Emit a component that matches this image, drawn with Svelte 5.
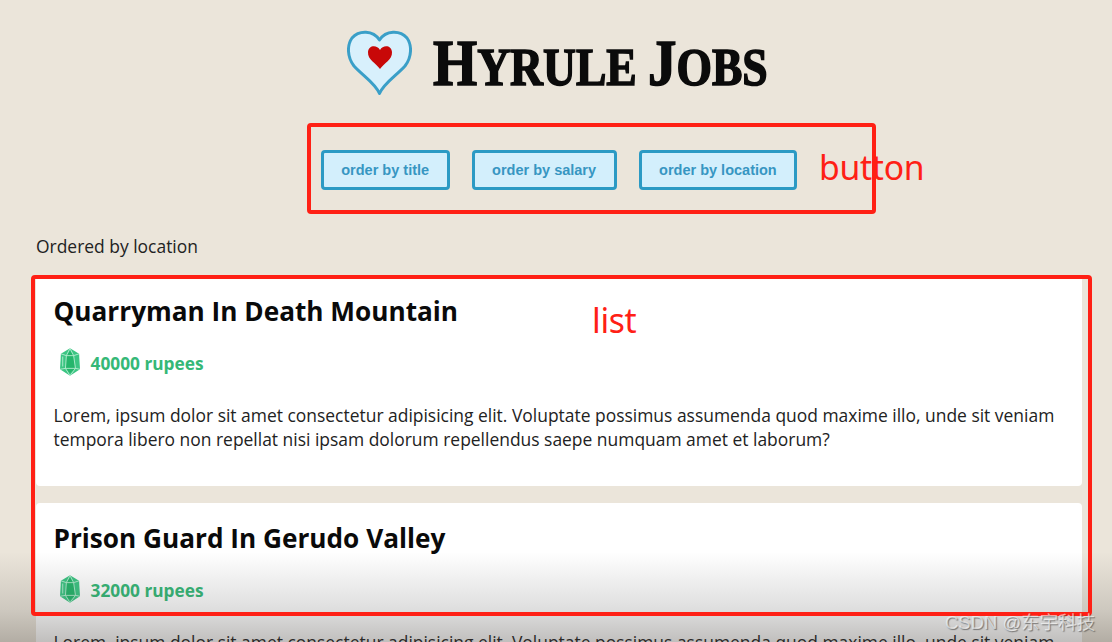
<script lang="ts">
  type Job = { title: string; salary: number };

  const jobs: Job[] = [
    { title: 'Quarryman In Death Mountain', salary: 40000 },
    { title: 'Prison Guard In Gerudo Valley', salary: 32000 }
  ];

  const orders = ['title', 'salary', 'location'];
  let order = $state('location');
</script>

<div class="page">
  <header>
    <svg class="heart" viewBox="0 0 65 65" width="65" height="65">
      <path
        d="M32.500 63.500 C28 53 16 46 7 36 C0 27 0 15 5 8 C12 0 26 0 32.500 10 C39 0 53 0 60 8 C65 15 65 27 58 36 C49 46 37 53 32.500 63.500 Z"
        fill="#d8f0fc"
        stroke="#3a9fc8"
        stroke-width="3"
        stroke-linejoin="round"
      />
      <path
        d="M33 39 C29 33 20.500 30 21 22 C21.500 15 30 14.500 33 20 C36 14.500 44.500 15 45 22 C45.500 30 37 33 33 39 Z"
        fill="#c80808"
      />
    </svg>
    <h1><span>H</span>yrule <span>J</span>obs</h1>
  </header>

  <div class="orders">
    {#each orders as o}
      <button onclick={() => (order = o)}>order by {o}</button>
    {/each}
  </div>

  <p class="ordered">Ordered by {order}</p>

  <ul>
    {#each jobs as job}
      <li>
        <h2>{job.title}</h2>
        <div class="salary">
          <svg viewBox="0 0 22 30" width="20" height="28">
            <path d="M11 0 L21 6 L22 23 L11 30 L0 23 L1 6 Z" fill="#3cc583" />
            <path d="M7 8 L11 3 L15 8 L17 22 L11 27 L6 22 Z" fill="#25b56b" />
            <path
              d="M11 0 L7 8 L6 22 L11 30 M11 0 L15 8 L17 22 L11 30 M7 8 L15 8 M6 22 L17 22 M1 6 L7 8 M21 6 L15 8 M0 23 L6 22 M22 23 L17 22 M3 9 L3 20"
              fill="none"
              stroke="#c4f1da"
              stroke-width="0.9"
            />
          </svg>
          <span>{job.salary} rupees</span>
        </div>
        <p>
          Lorem, ipsum dolor sit amet consectetur adipisicing elit. Voluptate possimus assumenda quod maxime illo, unde sit veniam tempora libero non repellat nisi ipsam dolorum repellendus saepe numquam amet et laborum?
        </p>
      </li>
    {/each}
  </ul>

  <div class="shade"></div>
  <div class="mark button-mark"></div>
  <span class="note button-note">button</span>
  <div class="mark list-mark"></div>
  <span class="note list-note">list</span>
  <span class="watermark">CSDN @东宇科技</span>
</div>

<style>
  :global(body) {
    margin: 0;
    background: #ebe5da;
  }
  .page {
    position: relative;
    height: 642px;
    overflow: hidden;
    background: #ebe5da;
    font-family: 'Open Sans', sans-serif;
    color: #222;
  }
  header {
    display: flex;
    justify-content: center;
    align-items: center;
    gap: 21px;
    padding: 30px 0 0 3px;
    height: 65px;
  }
  h1 {
    width: 335px;
    margin: 0;
    padding-top: 4px;
    white-space: nowrap;
    font-family: 'Liberation Serif', serif;
    font-weight: 700;
    font-size: 53px;
    line-height: 65px;
    text-transform: uppercase;
    color: #0b0b0b;
    -webkit-text-stroke: 1.6px #0b0b0b;
    transform: scaleX(0.86);
    transform-origin: left center;
  }
  h1 span {
    font-size: 66px;
  }
  .orders {
    display: flex;
    justify-content: center;
    gap: 22px;
    margin: 55px 0 0 6px;
  }
  button {
    height: 40px;
    padding: 0 17.5px;
    border: 3px solid #2b9ac4;
    border-radius: 4px;
    background: #d3effc;
    color: #3796c2;
    font-family: 'Liberation Sans', sans-serif;
    font-size: 14.5px;
    font-weight: 700;
  }
  .ordered {
    margin: 44px 0 0 36px;
    font-size: 17.45px;
    line-height: 24px;
  }
  ul {
    list-style: none;
    margin: 18px 30px 0 36px;
    padding: 0;
  }
  li {
    background: #fff;
    border-radius: 4px;
    padding: 17px 18px 35px 17.5px;
    margin-bottom: 17px;
  }
  h2 {
    margin: 0;
    font-size: 26.2px;
    line-height: 36px;
    font-weight: 700;
    color: #0a0a0a;
  }
  .salary {
    display: flex;
    align-items: center;
    gap: 11px;
    margin: 19px 0 0 6px;
    height: 30px;
    color: #35b877;
    font-size: 17.3px;
    font-weight: 700;
  }
  .salary svg {
    margin-bottom: 3px;
  }
  li p {
    margin: 25px 0 0;
    font-size: 17.45px;
    line-height: 24px;
    color: #222;
  }
  .shade {
    position: absolute;
    left: 0;
    right: 0;
    bottom: 0;
    height: 90px;
    background: linear-gradient(
      to bottom,
      rgba(60, 60, 60, 0),
      rgba(60, 60, 60, 0.17) 64%,
      rgba(60, 55, 50, 0.32)
    );
  }
  .mark {
    position: absolute;
    box-sizing: border-box;
    border: 4px solid #ff2015;
    border-radius: 4px;
  }
  .button-mark {
    left: 307px;
    top: 123px;
    width: 569px;
    height: 91px;
  }
  .list-mark {
    left: 31px;
    top: 275px;
    width: 1061px;
    height: 341px;
  }
  .note {
    position: absolute;
    font-family: 'Noto Sans', sans-serif;
    font-size: 33.7px;
    letter-spacing: -0.3px;
    line-height: 44px;
    color: #ff2015;
  }
  .button-note {
    left: 819px;
    top: 145px;
  }
  .list-note {
    left: 592px;
    top: 298px;
  }
  .watermark {
    position: absolute;
    left: 945px;
    top: 611px;
    font-family: 'Liberation Sans', 'Noto Sans CJK SC', sans-serif;
    font-size: 18.5px;
    line-height: 24px;
    color: rgba(255, 255, 255, 0.62);
    text-shadow: 1px 1px 1px rgba(60, 60, 60, 0.6);
  }
</style>
